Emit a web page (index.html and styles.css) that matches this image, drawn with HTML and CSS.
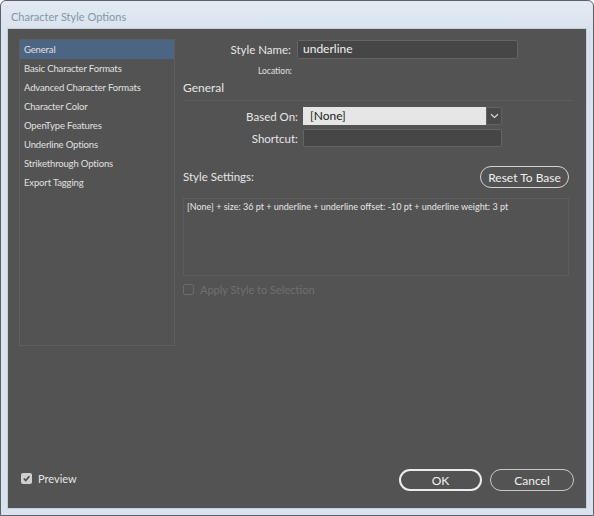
FILE: index.html
```html
<!DOCTYPE html>
<html>
<head>
<meta charset="utf-8">
<link rel="stylesheet" href="styles.css">
</head>
<body>
<div class="window">
  <div class="titlebar">Character Style Options</div>
  <div class="client">
    <div class="top">
      <ul class="sidebar">
        <li class="sel">General</li>
        <li>Basic Character Formats</li>
        <li>Advanced Character Formats</li>
        <li>Character Color</li>
        <li>OpenType Features</li>
        <li>Underline Options</li>
        <li>Strikethrough Options</li>
        <li>Export Tagging</li>
      </ul>
      <div class="main">
        <div class="row name-row">
          <span class="lbl lbl-name">Style Name:</span>
          <div class="input name-input">underline</div>
        </div>
        <div class="row loc-row">
          <span class="lbl lbl-loc">Location:</span>
        </div>
        <div class="section">General</div>
        <div class="sep"></div>
        <div class="row based-row">
          <span class="lbl lbl-field">Based On:</span>
          <div class="select">
            <div class="select-val">[None]</div>
            <div class="select-btn">
              <svg width="9" height="6" viewBox="0 0 9 6"><path d="M1 1.2 L4.5 4.5 L8 1.2" fill="none" stroke="#d8d8d8" stroke-width="1.2"/></svg>
            </div>
          </div>
        </div>
        <div class="row short-row">
          <span class="lbl lbl-field">Shortcut:</span>
          <div class="input short-input"></div>
        </div>
        <div class="row settings-row">
          <span class="settings-lbl">Style Settings:</span>
          <button class="btn reset">Reset To Base</button>
        </div>
        <div class="settings-box">[None] + size: 36 pt + underline + underline offset: -10 pt + underline weight: 3 pt</div>
        <div class="row apply-row">
          <span class="cb cb-off"></span>
          <span class="apply-lbl">Apply Style to Selection</span>
        </div>
      </div>
    </div>
    <div class="bottom">
      <div class="preview">
        <span class="cb cb-on">
          <svg width="9" height="9" viewBox="0 0 9 9"><path d="M1.8 4.6 L3.7 6.6 L7.4 2.2" fill="none" stroke="#4a4a4a" stroke-width="1.5"/></svg>
        </span>
        <span class="preview-lbl">Preview</span>
      </div>
      <div class="buttons">
        <button class="btn ok">OK</button>
        <button class="btn cancel">Cancel</button>
      </div>
    </div>
  </div>
</div>
</body>
</html>
```

FILE: styles.css
```css
* { box-sizing: border-box; }
html, body {
  margin: 0;
  padding: 0;
  width: 594px;
  height: 516px;
  background: #ffffff;
  overflow: hidden;
}
.window {
  width: 594px;
  height: 516px;
  border: 1px solid #5c6066;
  border-radius: 6px 6px 0 0;
  background: linear-gradient(#e3eaf3, #d8e2ee 30px, #d9e3ef);
  display: flex;
  flex-direction: column;
  padding: 0 6px 6px 6px;
  font-family: "Lato", "Noto Sans", sans-serif;
}
.titlebar {
  height: 27px;
  padding: 9px 0 0 4px;
  font-family: "Lato", sans-serif;
  font-size: 11px;
  line-height: 14px;
  color: #8894a3;
}
.client {
  flex: 1;
  background: #535353;
  border: 1px solid #c4cfdc;
  display: flex;
  flex-direction: column;
  padding: 10px 12px 17px 11px;
  color: #e2e2e2;
}
.top {
  display: flex;
  gap: 8px;
}
.sidebar {
  list-style: none;
  margin: 0;
  padding: 0;
  width: 156px;
  height: 307px;
  border: 1px solid #5f5f5f;
  font-size: 9.5px;
  letter-spacing: -0.15px;
}
.sidebar li {
  height: 19px;
  line-height: 19px;
  padding-left: 4px;
  color: #e0e0e0;
  white-space: nowrap;
}
.sidebar li.sel {
  background: #4c6583;
  height: 19px;
}
.main {
  flex: 1;
  display: flex;
  flex-direction: column;
  padding-right: 5px;
  padding-top: 1px;
}
.row {
  display: flex;
  align-items: center;
}
.lbl {
  text-align: right;
  color: #e6e6e6;
  white-space: nowrap;
}
.lbl-name {
  width: 108px;
  font-size: 11.5px;
}
.name-row {
  height: 19px;
  gap: 6px;
}
.input {
  background: #464646;
  border: 1px solid #646464;
  border-radius: 2px;
  color: #f0f0f0;
  font-size: 12px;
  padding: 0 5px;
  line-height: 16px;
}
.name-input {
  width: 221px;
  height: 19px;
}
.loc-row {
  height: 12px;
  margin-top: 6px;
}
.lbl-loc {
  width: 109px;
  font-size: 8.5px;
  color: #e0e0e0;
}
.section {
  margin-top: 3px;
  font-size: 12px;
  line-height: 15px;
  color: #e6e6e6;
}
.sep {
  margin-top: 5px;
  height: 1px;
  background: #5d5d5d;
  margin-right: -5px;
}
.based-row {
  margin-top: 6px;
  height: 18px;
  gap: 5px;
}
.lbl-field {
  width: 115px;
  font-size: 11.5px;
}
.select {
  display: flex;
  width: 199px;
  height: 18px;
}
.select-val {
  flex: 1;
  background: #e6e6e6;
  color: #222;
  font-size: 12px;
  line-height: 18px;
  padding-left: 7px;
}
.select-btn {
  width: 16px;
  background: #494949;
  border: 1px solid #626262;
  border-radius: 0 2px 2px 0;
  display: flex;
  align-items: center;
  justify-content: center;
}
.short-row {
  margin-top: 4px;
  height: 18px;
  gap: 5px;
}
.short-input {
  width: 199px;
  height: 18px;
}
.settings-row {
  margin-top: 19px;
  height: 22px;
  justify-content: space-between;
}
.settings-lbl {
  font-size: 11.5px;
  color: #e6e6e6;
  margin-top: -1px;
}
.btn {
  font-family: "Lato", "Noto Sans", sans-serif;
  background: transparent;
  color: #f0f0f0;
  font-size: 12px;
  height: 22px;
  border-radius: 11px;
  padding: 0;
}
.reset {
  width: 89px;
  border: 1.5px solid #d4d4d4;
}
.settings-box {
  margin-top: 10px;
  height: 78px;
  border: 1px solid #5d5d5d;
  font-size: 9px;
  padding: 2px 3px;
  line-height: 12px;
  color: #e6e6e6;
  white-space: nowrap;
}
.apply-row {
  margin-top: 7px;
  height: 12px;
  gap: 6px;
}
.cb {
  width: 11px;
  height: 11px;
  border-radius: 2px;
  display: inline-flex;
  align-items: center;
  justify-content: center;
}
.cb-off {
  border: 1px solid #6b6b6b;
}
.apply-lbl {
  font-size: 11px;
  color: #707070;
}
.bottom {
  margin-top: auto;
  display: flex;
  align-items: flex-start;
  justify-content: space-between;
  padding-left: 2px;
}
.preview {
  display: flex;
  align-items: center;
  gap: 6px;
  margin-top: 3px;
}
.cb-on {
  background: #cfcfcf;
}
.preview-lbl {
  font-size: 11px;
  color: #e6e6e6;
}
.buttons {
  display: flex;
  gap: 8px;
}
.ok {
  width: 83px;
  border: 2px solid #ececec;
}
.cancel {
  width: 84px;
  border: 1.5px solid #c8c8c8;
}
```
